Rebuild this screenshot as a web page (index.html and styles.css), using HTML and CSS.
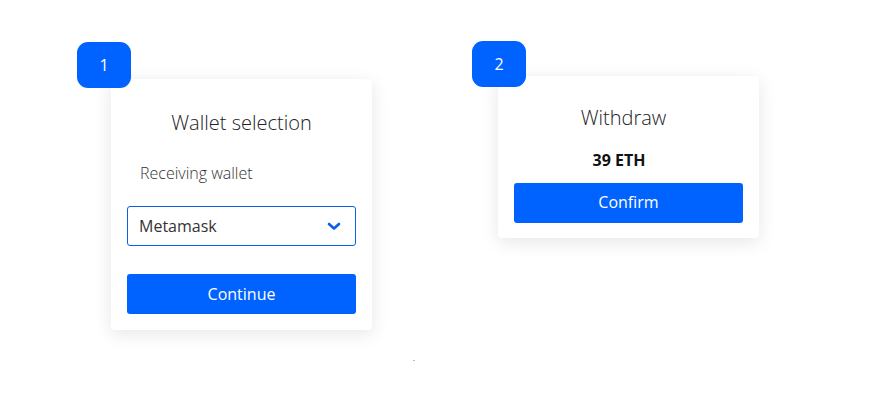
FILE: index.html
```html
<!DOCTYPE html>
<html>
<head>
<meta charset="utf-8">
<link rel="stylesheet" href="styles.css">
</head>
<body>
<div class="canvas">
  <div class="step step-one">
    <div class="badge">1</div>
    <div class="card card-wallet">
      <div class="title">Wallet selection</div>
      <div class="label">Receiving wallet</div>
      <div class="select">
        <span>Metamask</span>
        <svg class="chev" width="14" height="9" viewBox="0 0 14 9"><path d="M2 2 L7 6.5 L12 2" fill="none" stroke="#0a5ee8" stroke-width="2.6" stroke-linecap="round" stroke-linejoin="round"/></svg>
      </div>
      <div class="btn btn-continue">Continue</div>
    </div>
  </div>
  <div class="step step-two">
    <div class="badge">2</div>
    <div class="card card-withdraw">
      <div class="title title-withdraw">Withdraw</div>
      <div class="amount">39 ETH</div>
      <div class="btn btn-confirm">Confirm</div>
    </div>
  </div>
  <span class="speck"></span>
</div>
</body>
</html>
```

FILE: styles.css
```css
html, body {
  margin: 0;
  padding: 0;
  background: #ffffff;
}
body {
  font-family: "Open Sans", "Noto Sans", sans-serif;
  color: #333;
}
.canvas {
  position: relative;
  width: 870px;
  height: 409px;
  display: flex;
  align-items: flex-start;
  padding: 41px 0 0 77px;
  box-sizing: border-box;
  gap: 100px;
}
.step {
  position: relative;
}
.step-one {
  margin-top: 1px;
  padding: 37px 0 0 34px;
}
.step-two {
  padding: 35px 0 0 26px;
}
.badge {
  position: absolute;
  top: 0;
  left: 0;
  z-index: 2;
  width: 54px;
  height: 46px;
  border-radius: 11px;
  background: #0062ff;
  color: #fff;
  font-size: 16px;
  display: flex;
  align-items: center;
  justify-content: center;
}
.card {
  width: 261px;
  box-sizing: border-box;
  background: #fff;
  border-radius: 4px;
  box-shadow: 0 4px 18px rgba(0, 0, 0, 0.10);
  display: flex;
  flex-direction: column;
}
.card-wallet {
  padding: 30px 16px 16px;
}
.card-withdraw {
  padding: 28px 16px 15px;
}
.title {
  font-weight: 300;
  font-size: 20px;
  line-height: 28px;
  text-align: center;
  color: #222;
}
.title-withdraw {
  padding-right: 10px;
}
.label {
  margin-top: 25px;
  padding-left: 13px;
  font-weight: 300;
  font-size: 16px;
  line-height: 22px;
  color: #333;
}
.select {
  margin-top: 22px;
  height: 40px;
  box-sizing: border-box;
  border: 1px solid #0a5ee8;
  border-radius: 3px;
  display: flex;
  align-items: center;
  justify-content: space-between;
  padding: 0 14px 0 11px;
  font-size: 16px;
  color: #333;
}
.chev {
  display: block;
}
.btn {
  height: 40px;
  border-radius: 3px;
  background: #0062ff;
  color: #fff;
  font-size: 16px;
  display: flex;
  align-items: center;
  justify-content: center;
}
.btn-continue {
  margin-top: 28px;
}
.btn-confirm {
  margin-top: 12px;
  padding-bottom: 3px;
  box-sizing: border-box;
}
.amount {
  margin-top: 17px;
  padding-right: 19px;
  font-weight: 700;
  font-size: 16px;
  line-height: 22px;
  text-align: center;
  color: #111;
}
.speck {
  position: absolute;
  left: 413px;
  top: 360px;
  width: 2px;
  height: 1px;
  background: #bbb;
}
```
